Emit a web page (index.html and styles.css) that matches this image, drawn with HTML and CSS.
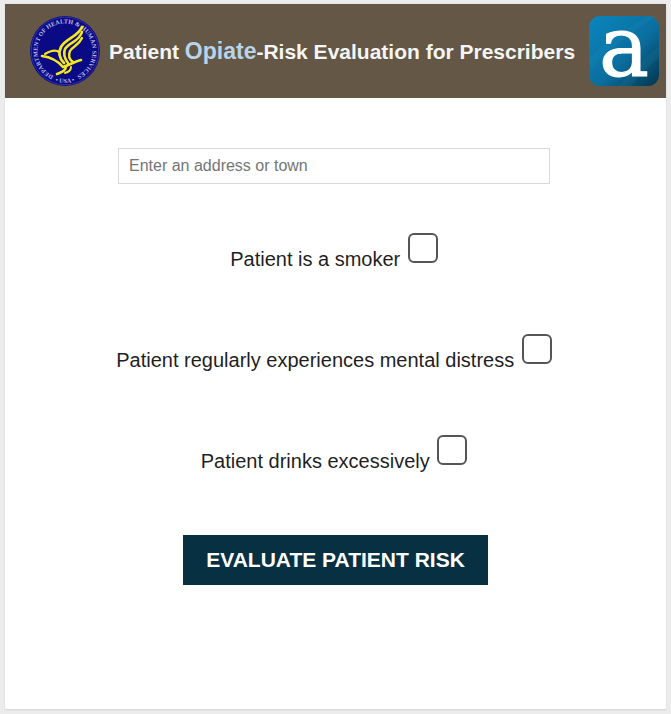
FILE: index.html
```html
<!DOCTYPE html>
<html lang="en">
<head>
  <meta charset="UTF-8" />
  <meta name="viewport" content="width=device-width, initial-scale=1.0"/>
  <title>Patient Opiate-Risk Evaluation for Prescribers</title>
  <link rel="stylesheet" href="styles.css">
</head>
<body>
  <div class="card">
    <header class="header">
      <!-- HHS seal -->
      <svg class="seal" viewBox="0 0 70 70" width="70" height="70" aria-hidden="true">
        <defs>
          <path id="sealRing" d="M23.4 59.9 A27.5 27.5 0 1 1 46.6 59.9"/>
          <path id="sealBottom" d="M19 62.7 A32 32 0 0 0 51 62.7"/>
        </defs>
        <circle cx="35" cy="35" r="35" fill="#0a0a84"/>
        <circle cx="35" cy="35" r="33.8" fill="none" stroke="#3a3aa6" stroke-width="0.8"/>
        <text class="seal-text"><textPath href="#sealRing" textLength="148">DEPARTMENT OF HEALTH &amp; HUMAN SERVICES</textPath></text>
        <text class="seal-text" text-anchor="middle"><textPath href="#sealBottom" startOffset="50%">• USA •</textPath></text>
        <g fill="none" stroke="#f4e81c" stroke-linecap="round">
          <path d="M52 11 C48 21 36 22 31 31 C28 37 30 43 34 47" stroke-width="2.8"/>
          <path d="M52 16 C49 26 39 26 35 33 C33 38 35 43 38 47" stroke-width="2.6"/>
          <path d="M52 22 C49 29 43 30 40 35 C38 40 40 44 43 46" stroke-width="2.4"/>
          <path d="M15 38 C20 35 25 33 29 36" stroke-width="2.2"/>
          <path d="M12 40 C20 41 27 44 33 51 C37 50 46 45 51 44" stroke-width="2.6"/>
          <path d="M36 50 C36 55 32 56 27 58" stroke-width="2.6"/>
          <path d="M41 51 C41 55 38 56 35 57" stroke-width="2"/>
        </g>
      </svg>
      <h1 class="title">Patient <span class="title-accent">Opiate</span>-Risk Evaluation for Prescribers</h1>
      <!-- app logo -->
      <svg class="logo" viewBox="0 0 70 70" width="70" height="70" aria-hidden="true">
        <defs>
          <linearGradient id="logoBg" x1="0" y1="0" x2="1" y2="1">
            <stop offset="0" stop-color="#0a86bd"/>
            <stop offset="0.55" stop-color="#0a6f9f"/>
            <stop offset="1" stop-color="#04364f"/>
          </linearGradient>
        </defs>
        <rect width="70" height="70" rx="11" fill="url(#logoBg)"/>
        <path d="M0 42 C16 26 40 12 58 0 L68 0 C46 14 20 32 2 54 Z" fill="#2fa0d0" opacity="0.12"/>
        <path d="M30 70 C44 54 58 40 70 30 L70 42 C60 50 50 60 42 70 Z" fill="#3a9cc8" opacity="0.1"/>
        <text class="logo-letter" x="35" y="60" text-anchor="middle">a</text>
      </svg>
    </header>

    <form class="form">
      <input class="address" type="text" placeholder="Enter an address or town" />

      <label class="check-row">Patient is a smoker <input class="check" type="checkbox" /></label>
      <label class="check-row">Patient regularly experiences mental distress <input class="check" type="checkbox" /></label>
      <label class="check-row">Patient drinks excessively <input class="check" type="checkbox" /></label>

      <button class="submit" type="button">EVALUATE PATIENT RISK</button>
    </form>
  </div>
</body>
</html>
```

FILE: styles.css
```css
body {
  margin: 0;
  padding: 4px 5px;
  height: 714px;
  box-sizing: border-box;
  background-color: #ececec;
  font-family: "Liberation Sans", Arial, sans-serif;
  color: #1f1f1f;
}

.card {
  height: 706px;
  box-sizing: border-box;
  background-color: #fff;
  border-bottom: 1px solid #d9d9d9;
  box-shadow: 0 0 1px #c4c4c4;
}

.header {
  display: flex;
  align-items: center;
  height: 94px;
  padding: 0 7px 0 25px;
  box-sizing: border-box;
  background-color: #645746;
}

.seal {
  flex: none;
}

.seal-text {
  font-family: "Liberation Serif", serif;
  font-size: 6.2px;
  font-weight: bold;
  fill: #b9b9e6;
}

.title {
  flex: 1;
  margin: 0 0 0 9px;
  font-size: 21px;
  font-weight: bold;
  color: #f5f5f5;
  white-space: nowrap;
}

.title-accent {
  font-size: 23px;
  color: #b8d4ea;
}

.logo {
  flex: none;
}

.logo-letter {
  font-family: "DejaVu Serif", serif;
  font-size: 84px;
  fill: #fff;
  stroke: #fff;
  stroke-width: 1px;
}

.form {
  display: flex;
  flex-direction: column;
  align-items: center;
  padding: 50px 3px 0 0;
}

.address {
  width: 432px;
  height: 36px;
  box-sizing: border-box;
  padding: 0 10px;
  border: 1px solid #d9d9d9;
  font-family: inherit;
  font-size: 16px;
}

.address::placeholder {
  color: #757575;
}

.check-row {
  display: block;
  height: 30px;
  margin-top: 49px;
  font-size: 20px;
  white-space: nowrap;
}

.check-row + .check-row {
  margin-top: 71px;
}

.check {
  appearance: none;
  width: 30px;
  height: 30px;
  margin: 0 0 0 2px;
  border: 2px solid #555;
  border-radius: 6px;
  background-color: #fff;
  vertical-align: 3px;
}

.submit {
  width: 305px;
  height: 50px;
  margin: 70px 0 0 3px;
  border: none;
  background-color: #073042;
  color: #fff;
  font-family: inherit;
  font-size: 21px;
  font-weight: bold;
}
```
